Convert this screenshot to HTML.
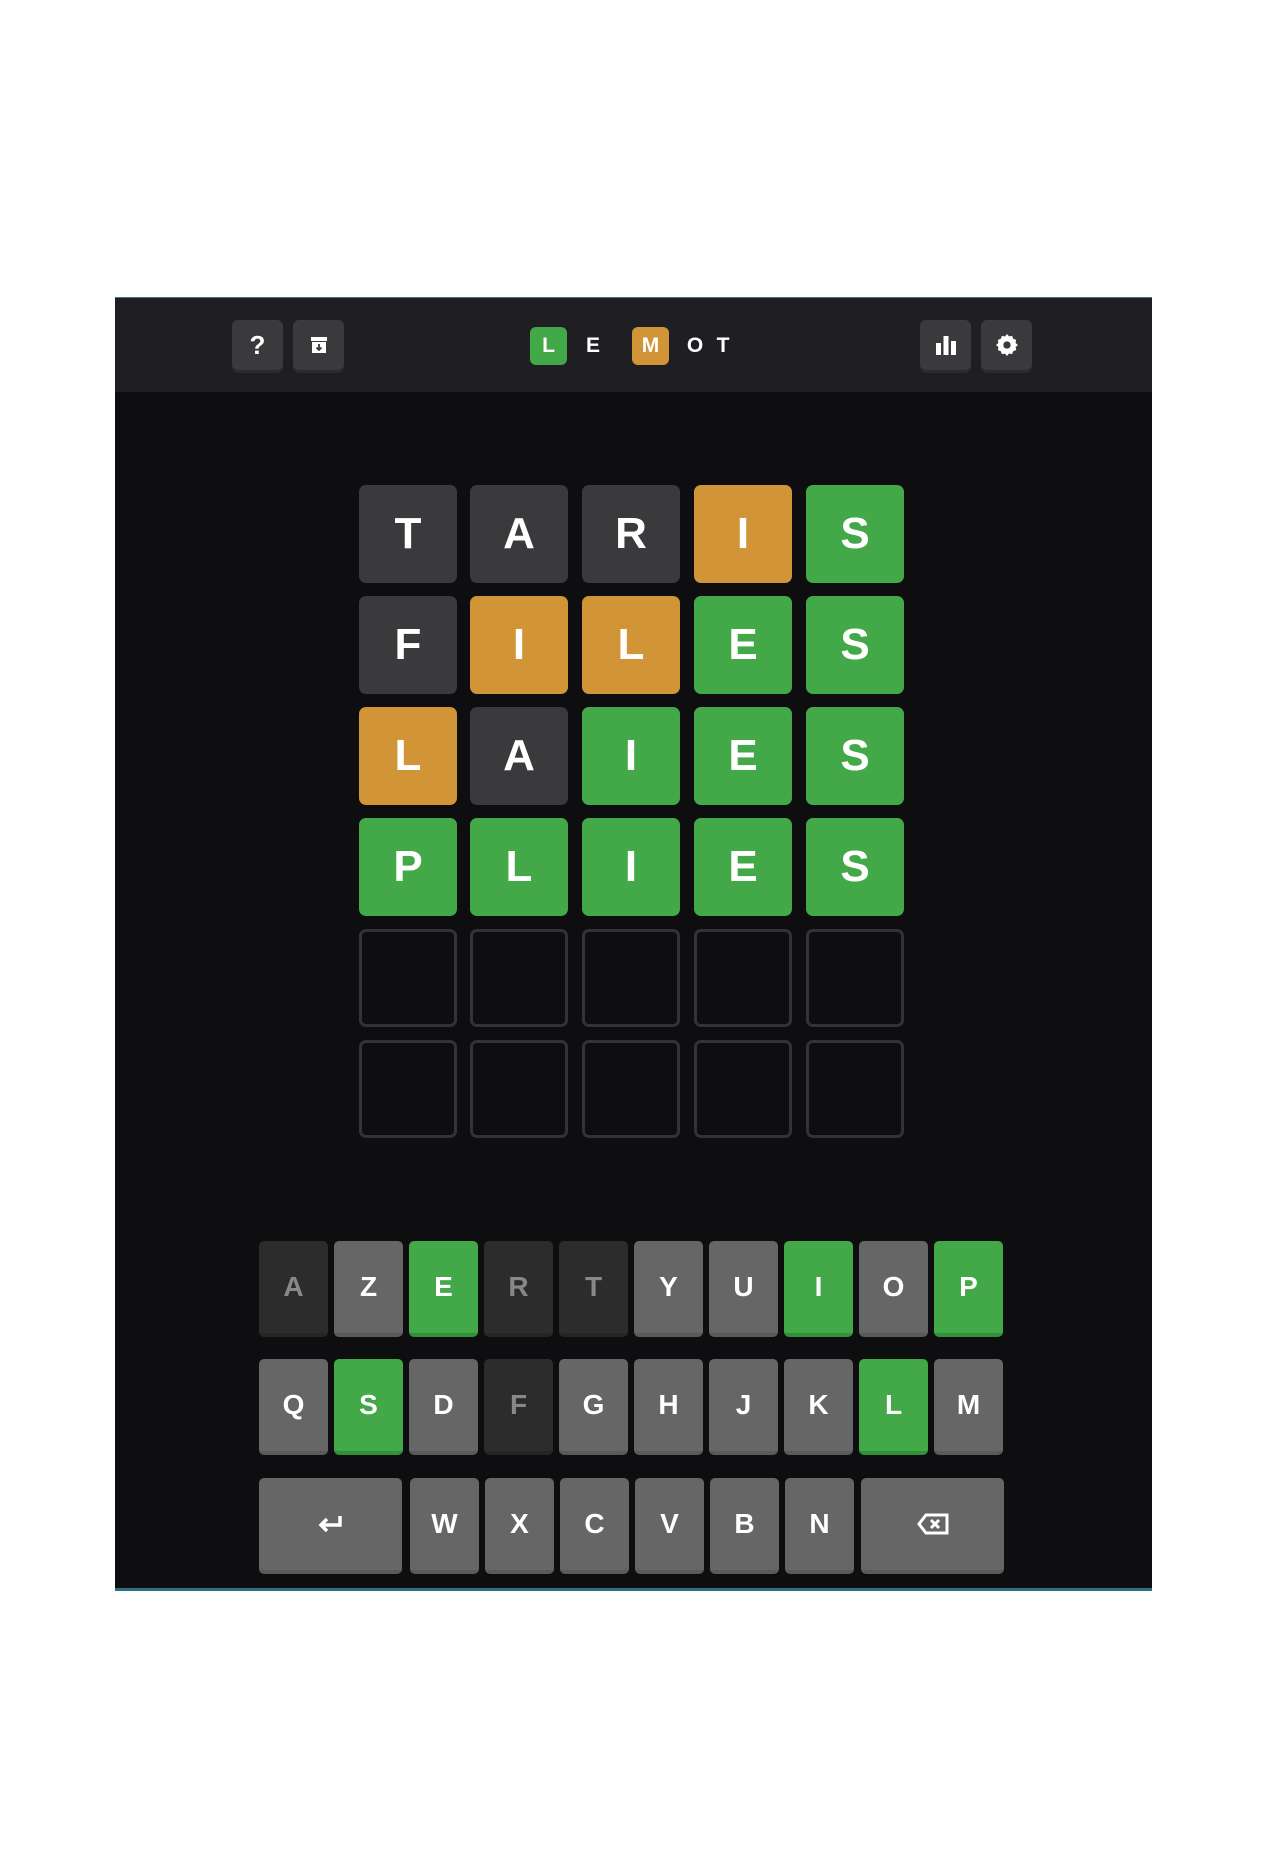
<!DOCTYPE html>
<html><head><meta charset="utf-8"><style>
*{margin:0;padding:0;box-sizing:border-box}
body{width:1264px;height:1850px;background:#fff;position:relative;font-family:"Liberation Sans",sans-serif;overflow:hidden}
#frame{position:absolute;left:115px;top:297px;width:1037px;height:1294px;background:#0e0e10;border-top:1px solid #3a7a88;border-bottom:3px solid #2a7080}
#hdr{position:absolute;left:0;top:0;width:100%;height:94px;background:#1f1f23}
.hb{position:absolute;top:22px;width:51px;height:50px;background:#3a3a3c;border-radius:6px;box-shadow:0 3px 0 #2b2b2e;display:flex;align-items:center;justify-content:center;color:#fff;font-weight:bold;font-size:26px}
.lg{position:absolute;top:29px;height:38px;color:#fff;font-weight:bold;font-size:21px;display:flex;align-items:center;justify-content:center}
.lt{width:37px;border-radius:6px}
.t{position:absolute;width:98px;height:98px;border-radius:7px;color:#fff;font-weight:bold;font-size:44px;display:flex;align-items:center;justify-content:center}
.d{background:#3a3a3c}.y{background:#d19436}.g{background:#43a847}.e{border:3px solid #333336}
.k{position:absolute;width:69px;height:96px;border-radius:5px;color:#fff;font-weight:bold;font-size:28px;display:flex;align-items:center;justify-content:center;background:#666;border-bottom:4px solid #5a5a5a}
.k.a{background:#2c2c2c;color:#888;border-bottom-color:#252525}
.k.g{background:#43a847;border-bottom-color:#32903a}
</style></head><body>
<div id="frame">
<div id="hdr">
<div class="hb" style="left:117px">?</div>
<div class="hb" style="left:178px"><svg width="18" height="18" viewBox="0 0 18 18"><rect x="1" y="1" width="16" height="4" fill="#fff"/><rect x="2" y="6" width="14" height="11" fill="#fff"/><path d="M9 8v6M6.5 11.5L9 14l2.5-2.5" stroke="#3a3a3c" stroke-width="1.8" fill="none"/></svg></div>
<div class="lg lt g" style="left:415px">L</div>
<div class="lg" style="left:468px;width:20px">E</div>
<div class="lg lt y" style="left:517px">M</div>
<div class="lg" style="left:568px;width:24px">O</div>
<div class="lg" style="left:598px;width:20px">T</div>
<div class="hb" style="left:805px"><svg width="22" height="20" viewBox="0 0 22 20"><rect x="1" y="8" width="5" height="12" fill="#fff"/><rect x="8.5" y="1" width="5" height="19" fill="#fff"/><rect x="16" y="6" width="5" height="14" fill="#fff"/></svg></div>
<div class="hb" style="left:866px"><svg width="22" height="22" viewBox="0 0 24 24"><path fill="#fff" d="M12 2l2.2 2.6 3.4-.6 1.1 3.2 3.2 1.2-.6 3.4L24 14l-2.6 2.2.6 3.4-3.2 1.1-1.2 3.2-3.4-.6L12 26 9.8 23.4l-3.4.6-1.1-3.2-3.2-1.2.6-3.4L0 14l2.6-2.2-.6-3.4 3.2-1.1 1.2-3.2 3.4.6z" transform="translate(0 -2)"/><circle cx="12" cy="12" r="4" fill="#3a3a3c"/></svg></div>
</div>
</div>
<div id="tiles"></div>
<script>
var rows=[["dT","dA","dR","yI","gS"],["dF","yI","yL","gE","gS"],["yL","dA","gI","gE","gS"],["gP","gL","gI","gE","gS"],["e","e","e","e","e"],["e","e","e","e","e"]];
var xs=[359,470,582,694,806],h="";
rows.forEach(function(r,i){r.forEach(function(c,j){h+='<div class="t '+c[0]+'" style="left:'+xs[j]+'px;top:'+(485+i*111)+'px">'+(c[1]||'')+'</div>';});});
var kb=[["aA","Z","gE","aR","aT","Y","U","gI","O","gP"],["Q","gS","D","aF","G","H","J","K","gL","M"]];
kb.forEach(function(r,i){r.forEach(function(c,j){var cl=c.length>1?c[0]:'',l=c.length>1?c[1]:c;h+='<div class="k '+cl+'" style="left:'+(259+j*75)+'px;top:'+(1241+i*118)+'px">'+l+'</div>';});});
var r3=["W","X","C","V","B","N"];
h+='<div class="k" style="left:259px;top:1478px;width:143px"><svg width="30" height="22" viewBox="0 0 30 22"><path d="M24 3v9H6M11 6l-6 6 6 6" stroke="#fff" stroke-width="3.5" fill="none"/></svg></div>';
r3.forEach(function(l,j){h+='<div class="k" style="left:'+(410+j*75)+'px;top:1478px">'+l+'</div>';});
h+='<div class="k" style="left:861px;top:1478px;width:143px"><svg width="32" height="22" viewBox="0 0 32 22"><path d="M9 2h21v18H9L2 11z" stroke="#fff" stroke-width="3" fill="none"/><path d="M14 7l8 8M22 7l-8 8" stroke="#fff" stroke-width="3"/></svg></div>';
document.getElementById('tiles').outerHTML=h;
</script>
</body></html>
